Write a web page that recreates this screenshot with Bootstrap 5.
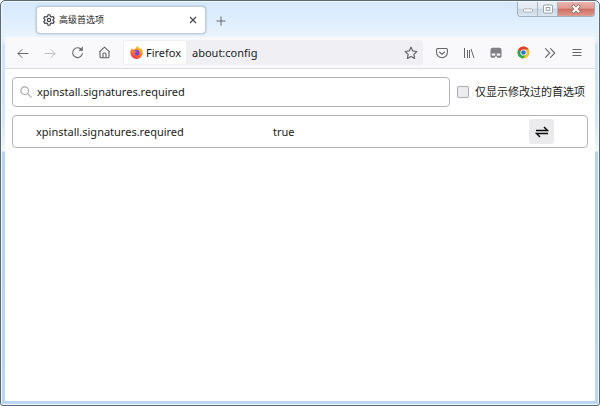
<!DOCTYPE html>
<html lang="zh-CN">
<head>
<meta charset="utf-8">
<meta name="viewport" content="width=device-width, initial-scale=1">
<title>高级首选项</title>
<link href="https://cdn.jsdelivr.net/npm/bootstrap@5.3.0/dist/css/bootstrap.min.css" rel="stylesheet">
<style>
body{font-family:"Noto Sans","Noto Sans CJK SC",sans-serif;font-size:11px;line-height:16px;color:#1b1b20;background:#fff}
svg{display:block;flex:none}
.window-frame{border:1px solid #5c6872;border-radius:5px 5px 3px 3px;padding:1px 4px 4px;
 background:linear-gradient(180deg,#d9eafb 0,#e6f2fd 40px,#cfe3fa 45px,#d4e6fa 120px,#f2f8fe 150px,#b5d4f4 151px,#b9d7f5 100%);box-shadow:inset 0 0 0 1px #f0f8ff}
.title-bar{height:35px;padding-left:31px;background:linear-gradient(180deg,#d5e8fb 0,#dcedfd 15px,#eaf4fe 100%)}
.browser-tab{width:170px;height:28px;margin-top:4px;padding:0 6px;background:#fff;border:1px solid #c2ccd8;border-radius:4px;box-shadow:0 0 2px #9eabb9;font-size:9px}
.plain-btn{border:0;background:none;padding:0;display:flex;align-items:center;justify-content:center;color:#66666c}
.new-tab{width:18px;height:18px;margin:10px 0 0 6px}
.win-controls{height:15px;border:1px solid #a3aebb;border-top:0;border-radius:0 0 4px 4px;overflow:hidden}
.win-controls button{width:20px;background:linear-gradient(#e9eff6 0,#e2eaf2 45%,#cbd6e2 50%,#dde7f0 100%);border-right:1px solid #a9b5c2}
.win-controls .win-close{width:36px;border:0;background:linear-gradient(#e9b4ae 0,#df9a91 45%,#cd6d61 50%,#de9a8e 100%)}
.nav-tools{height:32px;background:#f9f9fb;border-bottom:1px solid #dcdce0;padding:0 8px}
.nav-group>.plain-btn{width:20px;height:24px}
.nav-group{gap:7px}
.url-box{height:25px;background:#f0f0f4;border-radius:3px;padding:1px;margin:0 9px;min-width:0}
.identity{background:#fff;height:23px;width:62px;border-radius:2px;padding-left:6px;gap:3px}
.url-input{border:0;background:none;padding:0 0 0 6px;outline:0;min-width:0;color:#1b1b20}
.config-page{background:#fff;padding:8px 7px 0 7px;min-height:calc(100vh - 74px)}
.search-box{height:30px;border:1px solid #b4b4b8;border-radius:4px;padding:0 7px;gap:5px}
.search-box input{border:0;outline:0;padding:0;min-width:0;color:#1b1b20}
.only-modified{gap:6px;padding:0 3px 0 7px;white-space:nowrap}
.only-modified .form-check-input{width:12px;height:12px;border:1px solid #aaaab0;border-radius:2px;background-color:#ececf0}
.pref-box{margin-top:8px;border:1px solid #b4b4b8;border-radius:4px}
.pref-table{width:100%;table-layout:fixed}
.pref-table th,.pref-table td{height:31px;padding:0;font-weight:400;vertical-align:middle}
.pref-table th{width:260px;padding-left:23px}
.pref-table .cell-edit{width:58px}
.toggle-btn{width:25px;height:25px;background:#ebebed;border-radius:3px;color:#0c0c0d}
</style>
<script src="https://cdn.jsdelivr.net/npm/bootstrap@5.3.0/dist/js/bootstrap.bundle.min.js"></script>
</head>
<body>
<div class="window-frame min-vh-100">
 <header class="title-bar d-flex align-items-start">
  <div class="browser-tab d-flex align-items-center">
   <svg width="12" height="12" viewBox="0 0 16 16" fill="none" stroke="#3c3c42" stroke-width="1.500" stroke-linejoin="round"><path d="M6.600 1h2.800l.5 2.200 1.500.9 2.200-.7L15 5.800l-1.600 1.500v1.400L15 10.200l-1.400 2.400-2.200-.7-1.500.9L9.400 15H6.600l-.5-2.200-1.500-.9-2.200.7L1 10.200l1.600-1.500V7.300L1 5.800l1.400-2.400 2.200.7 1.500-.9z"/><circle cx="8" cy="8" r="2.200"/></svg>
   <span class="ms-1 flex-grow-1 text-nowrap">高级首选项</span>
   <button class="plain-btn" type="button" aria-label="关闭标签页"><svg width="12" height="12" viewBox="0 0 12 12" stroke="#444449" stroke-width="1.100"><path d="M3 3l6 6M9 3l-6 6"/></svg></button>
  </div>
  <button class="plain-btn new-tab" type="button" aria-label="新标签页"><svg width="10" height="10" viewBox="0 0 10 10" stroke="currentColor"><path d="M5 .5v9M.5 5h9"/></svg></button>
  <div class="win-controls d-flex ms-auto">
   <button class="plain-btn" type="button" aria-label="最小化"><svg width="12" height="12" viewBox="0 0 12 12"><rect x="1.500" y="6" width="9" height="3" rx="1" fill="#fff" stroke="#98a3b0" stroke-width=".8"/></svg></button>
   <button class="plain-btn" type="button" aria-label="最大化"><svg width="12" height="12" viewBox="0 0 12 12" fill="#fff" stroke="#8f9aa8" stroke-width=".9"><rect x="1.500" y="2" width="9" height="8" rx="1"/><rect x="4.200" y="4.500" width="3.600" height="3"/></svg></button>
   <button class="plain-btn win-close" type="button" aria-label="关闭"><svg width="12" height="12" viewBox="0 0 12 12" fill="none" stroke-linecap="square"><path d="M3.500 3.500l5 5M8.500 3.500l-5 5" stroke="#8d6a6b" stroke-width="3.400"/><path d="M3.500 3.500l5 5M8.500 3.500l-5 5" stroke="#fff" stroke-width="2"/></svg></button>
  </div>
 </header>
 <nav class="nav-tools d-flex align-items-center" aria-label="导航">
  <div class="nav-group d-flex">
   <button class="plain-btn" type="button" aria-label="后退"><svg width="12" height="12" viewBox="0 0 12 12" fill="none" stroke="currentColor" stroke-linecap="round" stroke-linejoin="round"><path d="M11 6.500H1M5 2.500L1 6.500l4 4"/></svg></button>
   <button class="plain-btn" type="button" aria-label="前进" disabled><svg width="12" height="12" viewBox="0 0 12 12" fill="none" stroke="#bdbdc2" stroke-linecap="round" stroke-linejoin="round"><path d="M1 6.500h10M7 2.500l4 4-4 4"/></svg></button>
   <button class="plain-btn" type="button" aria-label="刷新"><svg width="13" height="13" viewBox="0 0 13 13" fill="none" stroke="currentColor" stroke-width="1.100" stroke-linecap="round"><path d="M10.800 4.200A4.900 4.900 0 1 0 11.400 7.500"/><path d="M11.500 1.300v3.300H8.200z" fill="currentColor" stroke-width=".6" stroke-linejoin="round"/></svg></button>
   <button class="plain-btn" type="button" aria-label="主页"><svg width="13" height="13" viewBox="0 0 13 13" fill="none" stroke="currentColor" stroke-width="1.100" stroke-linejoin="round"><path d="M1.200 6.200l5.300-5 5.300 5M2 5.600v5.200q0 1 1 1h7q1 0 1-1V5.600M5 11.800V8q0-1 1-1h1q1 0 1 1v3.800"/></svg></button>
  </div>
  <div class="url-box d-flex align-items-center flex-grow-1">
   <div class="identity d-flex align-items-center flex-shrink-0">
    <svg width="13" height="13" viewBox="0 0 13 13"><defs><linearGradient id="flame" x1=".8" y1="0" x2=".3" y2="1"><stop offset="0" stop-color="#ffdf3c"/><stop offset=".45" stop-color="#ff8b22"/><stop offset="1" stop-color="#f52d50"/></linearGradient></defs><path d="M8 0c.4 1.500 1.300 1.900 2.500 2.800l.3-.8c1.300 1.200 2 3 2 4.700A6.200 6.200 0 0 1 .4 6.900C.3 5 1 3.500 2 2.300l.5 1.300c.8-.5 1.700-.5 2.400-.2C5.700 1.800 6.500.7 8 0z" fill="url(#flame)"/><circle cx="6.600" cy="6.700" r="2.900" fill="#7a42d8"/><path d="M2.500 5c1-.8 2.500-.8 3.500.2L6.800 5.700c-.7.800-1.500.7-2.100 1-.6.600 0 1.800 1.600 1.800-1.800 1.400-4.500.4-4.500-3.500z" fill="#ff7139"/></svg>
    <span>Firefox</span>
   </div>
   <input class="url-input flex-grow-1" type="text" value="about:config" aria-label="地址栏">
   <button class="plain-btn flex-shrink-0 me-1" type="button" aria-label="添加书签"><svg width="14" height="14" viewBox="0 0 14 14" fill="none" stroke="currentColor" stroke-width="1.200" stroke-linejoin="round"><path d="M7 1.200l1.800 3.700 4 .6L9.900 8.400l.7 4L7 10.500l-3.600 1.900.7-4L1.200 5.500l4-.6z"/></svg></button>
  </div>
  <div class="nav-group d-flex">
   <button class="plain-btn" type="button" aria-label="Pocket"><svg width="12" height="12" viewBox="0 0 12 12" fill="none" stroke="currentColor" stroke-width="1.100" stroke-linecap="round" stroke-linejoin="round"><path d="M1.600 1.500h8.800q1 0 1 1V5.400a5.400 5.400 0 0 1-10.800 0V2.500q0-1 1-1zM3.500 5l2.500 2.300L8.500 5"/></svg></button>
   <button class="plain-btn" type="button" aria-label="书库"><svg width="12" height="12" viewBox="0 0 12 12" fill="none" stroke="currentColor"><path d="M1.500 1v10M4.500 3v8M6.500 3v8M8 2l3 9"/></svg></button>
   <button class="plain-btn" type="button" aria-label="扩展"><svg width="12" height="12" viewBox="0 0 12 12"><path d="M2.500.8h7q2 0 2 2v6.500q0 1.500-1.500 1.500H2Q.5 10.800.5 9.300V2.800q0-2 2-2z" fill="#808085"/><path d="M1.800 6.400h3.500v1.400q0 1-1 1h-1.500q-1 0-1-1zM6.700 6.400h3.500v1.400q0 1-1 1H7.700q-1 0-1-1zM5 9.500h2V11H5z" fill="#f9f9fb"/></svg></button>
   <button class="plain-btn" type="button" aria-label="Chrome"><svg width="13" height="13" viewBox="0 0 13 13"><circle cx="6.500" cy="6.500" r="6" fill="#fbc116"/><path d="M6.500 6.500L1.300 3.500A6 6 0 0 0 6.300 12.500L9 8z" fill="#2da94f"/><path d="M1.300 3.500A6 6 0 0 1 11.700 3.500H6.500L4 6.500z" fill="#e33b2e"/><circle cx="6.500" cy="6.500" r="3.100" fill="#fff"/><circle cx="6.500" cy="6.500" r="2.300" fill="#2277d8"/></svg></button>
   <button class="plain-btn" type="button" aria-label="更多工具"><svg width="12" height="12" viewBox="0 0 12 12" fill="none" stroke="currentColor" stroke-width="1.100" stroke-linecap="round" stroke-linejoin="round"><path d="M1.500 1.700L5.700 6l-4.200 4.300M6.500 1.700L10.700 6l-4.200 4.300"/></svg></button>
   <button class="plain-btn" type="button" aria-label="菜单"><svg width="12" height="12" viewBox="0 0 12 12" stroke="currentColor"><path d="M1.500 2.500h9M1.500 5.500h9M1.500 8.500h9"/></svg></button>
  </div>
 </nav>
 <main class="config-page">
  <div class="d-flex align-items-center">
   <div class="search-box d-flex align-items-center flex-grow-1">
    <svg width="12" height="12" viewBox="0 0 12 12" fill="none" stroke="#aaaaae" stroke-width="1.200" stroke-linecap="round"><circle cx="4.700" cy="4.700" r="3.800"/><path d="M7.600 7.600l3.600 3.600"/></svg>
    <input class="flex-grow-1" type="text" value="xpinstall.signatures.required" aria-label="搜索首选项名称">
   </div>
   <div class="only-modified d-flex align-items-center">
    <input class="form-check-input m-0" type="checkbox" id="onlyModified">
    <label for="onlyModified">仅显示修改过的首选项</label>
   </div>
  </div>
  <div class="pref-box">
   <table class="pref-table" aria-label="首选项">
    <tbody><tr>
     <th scope="row">xpinstall.signatures.required</th>
     <td>true</td>
     <td class="cell-edit"><button class="plain-btn toggle-btn" type="button" aria-label="切换"><svg width="14" height="14" viewBox="0 0 14 14" fill="none" stroke="currentColor" stroke-width="1.500"><path d="M1 5.500h11.500L9 2M13 8.500H1.500L5 12"/></svg></button></td>
    </tr></tbody>
   </table>
  </div>
 </main>
</div>
</body>
</html>
